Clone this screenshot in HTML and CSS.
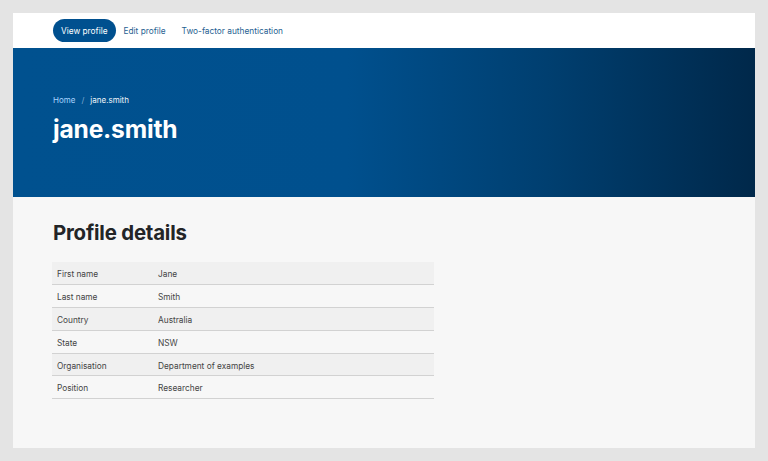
FILE: index.html
```html
<!DOCTYPE html>
<html lang="en">
<head>
<meta charset="utf-8">
<title>jane.smith</title>
<link rel="stylesheet" href="styles.css">
</head>
<body>
<div class="card">
  <nav class="tabs">
    <a class="tab active" href="#">View profile</a>
    <a class="tab" href="#">Edit profile</a>
    <a class="tab" href="#">Two-factor authentication</a>
  </nav>
  <header class="hero">
    <div class="crumbs"><a href="#" class="crumb-link">Home</a><span class="sep">/</span><span class="crumb-current">jane.smith</span></div>
    <h1 class="title">jane.smith</h1>
  </header>
  <main class="content">
    <h2 class="heading">Profile details</h2>
    <table class="details">
      <tr><td class="label">First name</td><td>Jane</td></tr>
      <tr><td class="label">Last name</td><td>Smith</td></tr>
      <tr><td class="label">Country</td><td>Australia</td></tr>
      <tr><td class="label">State</td><td>NSW</td></tr>
      <tr><td class="label">Organisation</td><td>Department of examples</td></tr>
      <tr><td class="label">Position</td><td>Researcher</td></tr>
    </table>
  </main>
</div>
</body>
</html>
```
FILE: styles.css
```css
* { box-sizing: border-box; }
html, body { margin: 0; padding: 0; }
body {
  background: #e4e4e4;
  padding: 13px;
  font-family: Inter, "Noto Sans", sans-serif;
  width: 768px;
  height: 461px;
}
.card {
  width: 742px;
  height: 435px;
  background: #f7f7f7;
  display: flex;
  flex-direction: column;
}
.tabs {
  height: 35px;
  background: #fff;
  display: flex;
  align-items: flex-start;
  padding: 6px 0 0 40px;
}
.tab {
  height: 23px;
  line-height: 24px;
  padding: 0 8px;
  font-size: 8.3px;
  color: #1f5f91;
  text-decoration: none;
  border-radius: 12px;
}
.tab.active {
  background: #00508f;
  color: #fff;
}
.hero {
  height: 149px;
  background: linear-gradient(to right, #00518f 0%, #00508e 45%, #003f70 72%, #00284a 100%);
  padding: 46px 40px 0 40px;
}
.crumbs {
  font-size: 8px;
  line-height: 12px;
  color: #fff;
  display: flex;
}
.crumb-link { color: #a9d4ff; text-decoration: none; }
.sep { color: #7ea8d0; margin: 0 6px; }
.crumb-current { color: #f2f6fa; font-weight: 400; }
.title {
  margin: 8px 0 0 0;
  font-size: 24.6px;
  line-height: 30px;
  font-weight: 700;
  color: #fff;
  letter-spacing: -0.2px;
}
.content {
  flex: 1;
  padding: 23px 40px 0 40px;
}
.heading {
  margin: 0 0 16px 0;
  font-size: 20.4px;
  line-height: 26px;
  font-weight: 700;
  color: #232527;
  letter-spacing: -0.2px;
}
.details {
  width: 382px;
  margin-left: -1px;
  border-collapse: collapse;
  font-size: 8.3px;
  color: #444;
}
.details tr { height: 22.8px; border-bottom: 1px solid #d2d2d2; }
.details tr:nth-child(odd) { background: #f0f0f0; }
.details td { padding: 2px 5px 0 5px; vertical-align: middle; }
.details td.label { width: 101px; }
```
